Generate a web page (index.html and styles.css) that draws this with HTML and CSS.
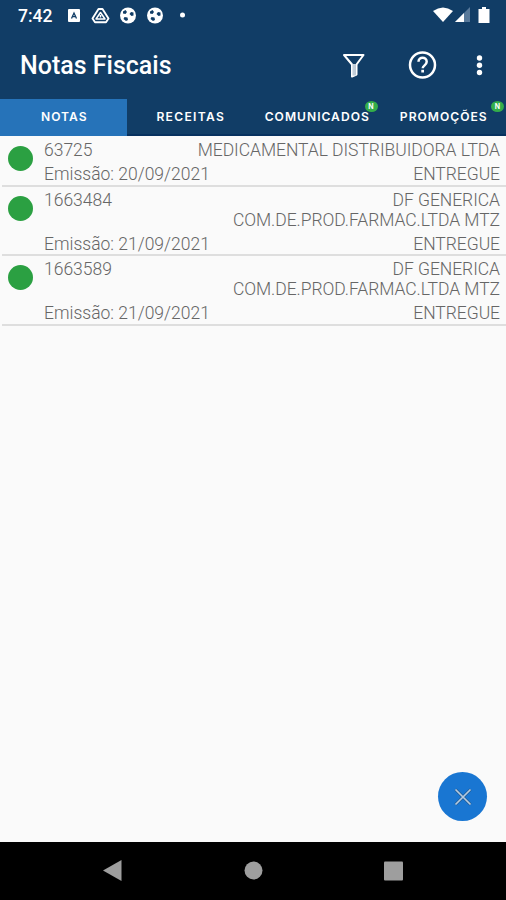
FILE: index.html
```html
<!DOCTYPE html>
<html lang="pt-BR">
<head>
<meta charset="utf-8">
<title>Notas Fiscais</title>
<link rel="stylesheet" href="styles.css">
</head>
<body>
<div class="screen">
  <header class="header">
    <div class="status">
      <span class="time">7:42</span>
      <svg class="notifications" width="122" height="18" viewBox="0 0 122 18">
        <rect x="1" y="2" width="12" height="13" rx="1" fill="#fff"/>
        <path d="M4.500 11.500 7 6l2.500 5.500M5.500 9.700h3" fill="none" stroke="#113d66" stroke-width="1.300"/>
        <path d="M31.500 2h4l6 9.500-2.500 3.700H28l-2.500-3.700z" fill="none" stroke="#fff" stroke-width="1.900" stroke-linejoin="round"/>
        <path d="M33.500 5.500 29 12h9zM33.500 8v2.500" fill="none" stroke="#fff" stroke-width="1.500" stroke-linejoin="round"/>
        <g id="ball">
          <circle cx="61" cy="8.500" r="8" fill="#fff"/>
          <path d="m56 4.500 2.500-1.500 1.500 2-1.500 2-2.500-.5zM64 5l2.500.5v3l-2 .5-2-2zM57.500 10l3 .5.500 2.500-2 1-2.500-2z" fill="#113d66"/>
        </g>
        <use href="#ball" x="27"/>
        <circle cx="115.500" cy="8" r="2.500" fill="#fff"/>
      </svg>
      <svg class="signals" width="58" height="18" viewBox="0 0 58 18">
        <path d="M0 4Q10-3 20 4L10 15z" fill="#fff"/>
        <path d="M22 15 37 0v15z" fill="#58799a"/>
        <path d="M22 15 31 6v9z" fill="#fff"/>
        <path d="M49 0h4v2h3.500v14h-11V2H49z" fill="#fff"/>
      </svg>
    </div>
    <div class="appbar">
      <h1>Notas Fiscais</h1>
      <svg class="actions" width="144" height="30" viewBox="0 0 144 30">
        <path d="M2 4h19.500l-7 9.500v10L10 25.500V13.500z" fill="none" stroke="#fff" stroke-width="2" stroke-linejoin="round"/>
        <path d="M12.200 13v11.500" stroke="#c2ced9" stroke-width="3.500"/>
        <circle cx="80.500" cy="14" r="12.500" fill="none" stroke="#fff" stroke-width="2.500"/>
        <path d="M76.500 10.800c0-5.300 8.200-5.300 8.200 0 0 3.400-4 3.600-4 6.500" fill="none" stroke="#fff" stroke-width="2.500"/>
        <rect x="79.300" y="18.800" width="2.700" height="2.700" fill="#fff"/>
        <g fill="#fff"><circle cx="137.500" cy="7" r="2.700"/><circle cx="137.500" cy="14.200" r="2.700"/><circle cx="137.500" cy="21.500" r="2.700"/></g>
      </svg>
    </div>
    <nav class="tabs">
      <div class="tab active"><span class="label">NOTAS</span></div>
      <div class="tab"><span class="label receitas">RECEITAS</span></div>
      <div class="tab"><span class="label">COMUNICADOS</span><span class="badge">N</span></div>
      <div class="tab"><span class="label">PROMOÇÕES</span><span class="badge">N</span></div>
    </nav>
  </header>
  <main class="list">
    <article class="row">
      <span class="dot"></span>
      <div class="info">
        <div class="line"><span>63725</span><span class="company">MEDICAMENTAL DISTRIBUIDORA LTDA</span></div>
        <div class="line"><span class="date">Emissão: 20/09/2021</span><span class="state">ENTREGUE</span></div>
      </div>
    </article>
    <article class="row">
      <span class="dot"></span>
      <div class="info">
        <div class="line"><span>1663484</span><span class="company">DF GENERICA<br>COM.DE.PROD.FARMAC.LTDA MTZ</span></div>
        <div class="line"><span class="date">Emissão: 21/09/2021</span><span class="state">ENTREGUE</span></div>
      </div>
    </article>
    <article class="row">
      <span class="dot"></span>
      <div class="info">
        <div class="line"><span>1663589</span><span class="company">DF GENERICA<br>COM.DE.PROD.FARMAC.LTDA MTZ</span></div>
        <div class="line"><span class="date">Emissão: 21/09/2021</span><span class="state">ENTREGUE</span></div>
      </div>
    </article>
    <button class="fab" aria-label="Fechar">
      <svg width="18" height="18" viewBox="0 0 18 18"><path d="m1.500 1.500 15 15M16.500 1.500l-15 15" stroke="#245a91" stroke-width="3"/><path d="m1.500 1.500 15 15M16.500 1.500l-15 15" stroke="#b4cbe2" stroke-width="1.700"/></svg>
    </button>
  </main>
  <footer class="navbar">
    <svg width="506" height="58" viewBox="0 0 506 58" fill="#9e9e9e">
      <path d="M103 28.500 121.500 18v21z"/>
      <circle cx="253.500" cy="28.500" r="9"/>
      <rect x="384" y="19.500" width="19" height="19" rx="1"/>
    </svg>
  </footer>
</div>
</body>
</html>
```
FILE: styles.css
```css
* { box-sizing: border-box; }
body { margin: 0; font-family: Roboto, "Liberation Sans", sans-serif; }
.screen { width: 506px; height: 900px; display: flex; flex-direction: column; background: #fafafa; overflow: hidden; }
.header { height: 136px; background: #113d66; color: #fff; display: flex; flex-direction: column; }
.status { height: 32px; display: flex; align-items: center; padding: 0 15px 0 18px; }
.time { width: 49px; font-size: 17.5px; font-weight: 500; line-height: 32px; }
.notifications { flex: none; }
.signals { margin-left: auto; }
.appbar { height: 67px; display: flex; align-items: center; justify-content: space-between; padding: 0 20px; }
h1 { margin: 0; font-size: 25px; font-weight: 500; line-height: 30px; }
.tabs { height: 37px; display: flex; }
.tab { flex: 1; position: relative; display: flex; align-items: center; justify-content: center; border-bottom: 2px solid #07315f; }
.tab.active { background: #2673b9; border-bottom-color: #2673b9; }
.label { font: 600 12.1px/16px Inter, sans-serif; letter-spacing: 1px; padding: 1px 0 0 2px; }
.receitas { letter-spacing: 1.3px; }
.badge { position: absolute; right: 2px; top: 2px; width: 13px; height: 11px; border-radius: 50%; background: #34ae4a; color: #fff; font: 700 7px/11px Inter, sans-serif; text-align: center; }
.list { flex: 1; position: relative; }
.row { display: flex; margin-left: 2px; padding: 4px 6px 0; border-bottom: 2px solid #dedede; color: #666; font-size: 17.5px; font-weight: 300; line-height: 20px; }
.row + .row { padding-top: 3px; }
.row + .row .info { padding-bottom: 0.5px; }
.dot { flex: none; width: 25px; height: 25px; margin: 6px 11px 0 0; border-radius: 50%; background: #2ba042; }
.info { flex: 1; display: flex; flex-direction: column; gap: 4px; padding-bottom: 0.6px; }
.line { display: flex; justify-content: space-between; }
.company, .state { text-align: right; letter-spacing: -.05px; }
.fab { position: absolute; right: 19px; bottom: 21px; width: 49px; height: 49px; border: 0; border-radius: 50%; padding: 0; background: #1976d2; display: flex; align-items: center; justify-content: center; }
.navbar { height: 58px; background: #000; }
.navbar svg { display: block; }
```
